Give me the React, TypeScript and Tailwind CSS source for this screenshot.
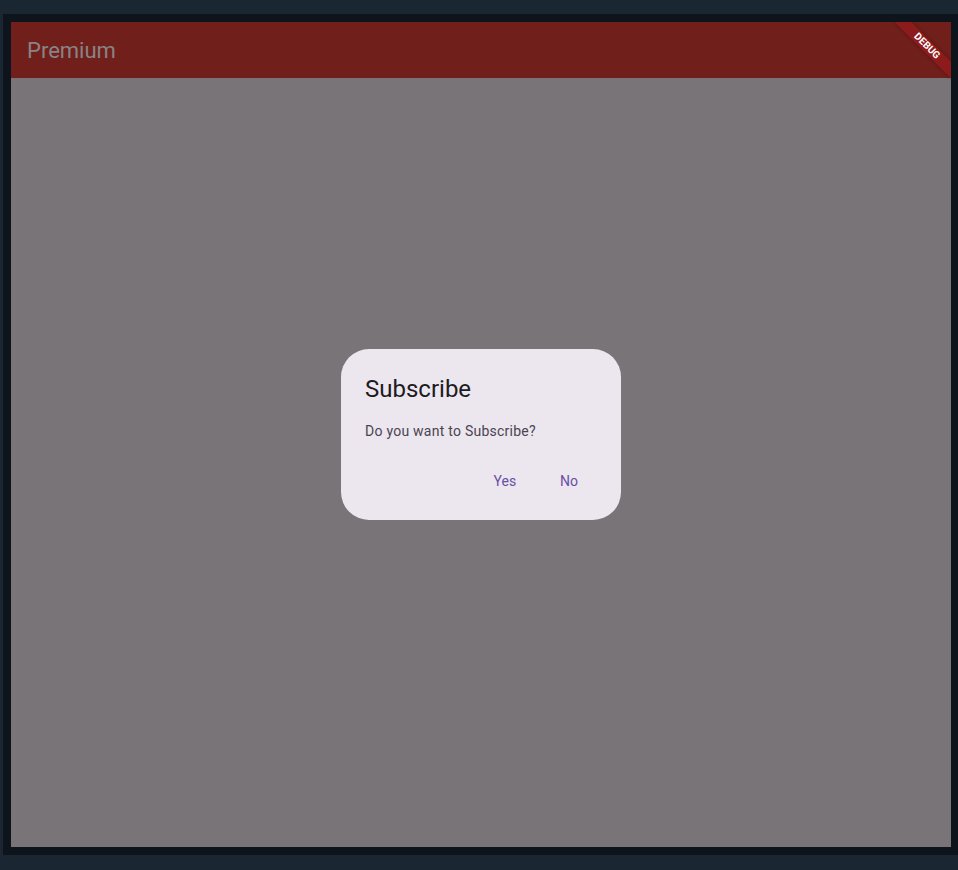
export default function App() {
  return (
    <div className="h-[870px] w-[958px] bg-[#1b2633] pl-[3px] pt-[14px] font-['Roboto','Liberation_Sans',sans-serif]">
      <div className="h-[841px] w-[955px] bg-[#0e141c] p-2">
        <div className="relative flex h-[825px] w-[940px] flex-col overflow-hidden bg-[#797477]">
          <header className="flex h-14 items-center bg-[#711f1b] px-4">
            <h1 className="text-[22px] text-[#8a8385]">Premium</h1>
          </header>

          <main className="flex flex-1 items-center justify-center pb-[56px]">
            <div className="w-[280px] rounded-[28px] bg-[#ece6ef] pt-6 pb-[19px]">
              <h2 className="px-6 text-[24px] leading-8 text-[#1d1b20]">Subscribe</h2>
              <p className="mt-4 px-6 text-[14px] leading-5 tracking-[0.25px] text-[#49454f]">
                Do you want to Subscribe?
              </p>
              <div className="mt-5 flex justify-end pr-5">
                <button className="h-10 w-16 text-[14px] tracking-[0.1px] text-[#6750a4]">Yes</button>
                <button className="h-10 w-16 text-[14px] tracking-[0.1px] text-[#6750a4]">No</button>
              </div>
            </div>
          </main>

          {/* debug banner */}
          <div className="absolute right-[-16px] top-[18px] flex h-3 w-20 rotate-45 items-center justify-center bg-[#8e1b1c] shadow-[0_0_4px_rgba(0,0,0,0.35)]">
            <span className="text-[10px] font-bold leading-none text-white">DEBUG</span>
          </div>
        </div>
      </div>
    </div>
  );
}
